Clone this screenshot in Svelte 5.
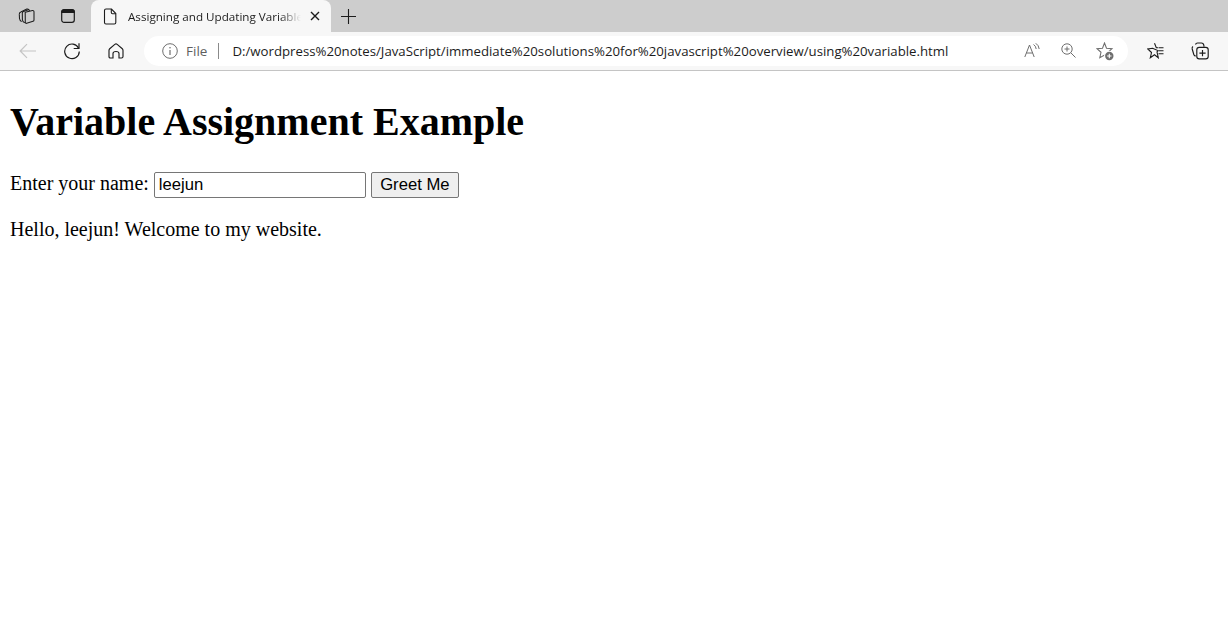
<script>
  let name = $state('leejun');
  let greeting = $state('Hello, leejun! Welcome to my website.');

  function greet() {
    greeting = `Hello, ${name}! Welcome to my website.`;
  }
</script>

<div class="tabstrip">
  <button class="strip-btn first" aria-label="Workspaces">
    <svg width="18" height="18" viewBox="0 0 18 18" fill="none" stroke="#1c1c1c" stroke-width="1.050">
      <path d="M8.200 5.200 L15.500 3.600 Q17 3.400 17 4.900 V13 Q17 14 16 14.300 L9.700 16.300 Q8.300 16.600 8.300 15.200 Z" />
      <path d="M5.300 6 L5.400 12.800 Q5.500 14.800 7.800 15.700" />
      <path d="M2.300 7.200 L2.500 11.500 Q2.700 13.600 4.700 14.600" />
      <path d="M2.300 7.200 Q2.200 5.400 3.800 4.900 L9.800 2.100 Q11.600 1.500 12.700 3.900" />
      <path d="M5.300 6 Q5.200 4.800 6.500 4.400 L12 2.600" />
    </svg>
  </button>
  <button class="strip-btn second" aria-label="Vertical tabs">
    <svg width="14" height="14" viewBox="0 0 14 14" fill="none" stroke="#1c1c1c" stroke-width="1.200">
      <path d="M.2 3 Q.2 .2 3 .2 H11 Q13.800 .2 13.800 3 V4 H.2 Z" fill="#1c1c1c" stroke="none" />
      <rect x=".7" y=".7" width="12.600" height="12.600" rx="2.400" />
    </svg>
  </button>

  <div class="tab">
    <svg class="doc" width="14" height="17" viewBox="0 0 14 17" fill="none" stroke="#1c1c1c" stroke-width="1.100">
      <path d="M1.500 2.500 Q1.500 1 3 1 H8.500 L12.800 5.500 V14.500 Q12.800 16 11.300 16 H3 Q1.500 16 1.500 14.500 Z" />
      <path d="M8.300 1 V4.500 Q8.300 5.700 9.500 5.700 H12.800" />
    </svg>
    <span class="tab-title">Assigning and Updating Variables</span>
    <svg class="tab-close" width="10" height="10" viewBox="0 0 10 10" stroke="#1c1c1c" stroke-width="1.400">
      <path d="M1 1 L9 9 M9 1 L1 9" />
    </svg>
  </div>

  <button class="strip-btn plus" aria-label="New tab">
    <svg width="15" height="15" viewBox="0 0 15 15" stroke="#1c1c1c" stroke-width="1.100">
      <path d="M7.500 0 V15 M0 7.500 H15" />
    </svg>
  </button>
</div>

<div class="toolbar">
  <button class="tool back" aria-label="Back">
    <svg width="18" height="16" viewBox="0 0 18 16" fill="none" stroke="#c4c4c4" stroke-width="1.200">
      <path d="M17 8 H1.200 M8 1.200 L1.200 8 L8 14.800" />
    </svg>
  </button>
  <button class="tool reload" aria-label="Refresh">
    <svg width="18" height="18" viewBox="0 0 18 18" fill="none" stroke="#1c1c1c" stroke-width="1.200">
      <path d="M15.600 6.200 A7.300 7.300 0 1 0 16.300 9.500" />
      <path d="M16 1.200 V6.500 H10.700" />
    </svg>
  </button>
  <button class="tool home" aria-label="Home">
    <svg width="16" height="16" viewBox="0 0 16 16" fill="none" stroke="#1c1c1c" stroke-width="1.150">
      <path d="M6.800 1.400 Q8 .5 9.200 1.400 L14.300 5.800 Q15 6.400 15 7.400 V13.500 Q15 15 13.500 15 H11 V10.500 Q11 8.500 8 8.500 Q5 8.500 5 10.500 V15 H2.500 Q1 15 1 13.500 V7.400 Q1 6.400 1.700 5.800 Z" />
    </svg>
  </button>

  <div class="addressbar">
    <svg class="info" width="16" height="16" viewBox="0 0 16 16" fill="none" stroke="#6e6e6e" stroke-width="1">
      <circle cx="8" cy="8" r="7.300" />
      <path d="M8 7 V12" stroke-width="1.200" />
      <circle cx="8" cy="4.700" r=".8" fill="#6e6e6e" stroke="none" />
    </svg>
    <span class="file">File</span>
    <span class="divider"></span>
    <span class="url">D:/wordpress%20notes/JavaScript/immediate%20solutions%20for%20javascript%20overview/using%20variable.html</span>
    <svg class="read" width="16" height="15" viewBox="0 0 16 15" fill="none" stroke="#6e6e6e" stroke-width="1">
      <path d="M.8 14 L5.500 2 L10.200 14 M2.400 10 H8.600" />
      <path d="M9.500 1.500 Q11.800 2.800 12.200 6 M11.800 .3 Q14.800 2.300 15.200 6" />
    </svg>
    <svg class="zoom" width="15" height="15" viewBox="0 0 15 15" fill="none" stroke="#6e6e6e" stroke-width="1">
      <circle cx="6" cy="6" r="5.200" />
      <path d="M9.800 9.800 L14.500 14.500 M6 3.500 V8.500 M3.500 6 H8.500" />
    </svg>
    <svg class="fav-add" width="18" height="19" viewBox="0 0 18 19" fill="none" stroke="#6e6e6e" stroke-width="1.050">
      <path d="M8.500 1 L10.500 6.200 L16 6.700 L12 10.300 L13.200 15.800 L8.500 13 L3.800 15.800 L5 10.300 L1 6.700 L6.500 6.200 Z" />
      <circle cx="13.300" cy="14" r="5.300" fill="#fff" stroke="none" />
      <circle cx="13.300" cy="14" r="4.200" fill="#6e6e6e" stroke="none" />
      <path d="M13.300 11.800 V16.200 M11.100 14 H15.500" stroke="#fff" stroke-width="1.100" />
    </svg>
  </div>

  <button class="tool favs" aria-label="Favorites">
    <svg width="18" height="17" viewBox="0 0 18 17" fill="none" stroke="#1c1c1c" stroke-width="1.100">
      <path d="M7.500 1.200 L9.300 5.800 H11 M11 8.600 L10 9.800 L11.300 15.800 L7.500 12.800 L3.300 15.800 L4.500 10.500 L.8 6.900 L5.600 6.200 Z" />
      <path d="M11.500 5.800 H16.500 M11.500 8.800 H16.500 M11.500 11.800 H16.500" />
    </svg>
  </button>
  <button class="tool collections" aria-label="Collections">
    <svg width="18" height="18" viewBox="0 0 18 18" fill="none" stroke="#1c1c1c" stroke-width="1.150">
      <path d="M4.500 2.500 Q5 1 6.500 1 H10.500 Q12.300 1 12.800 3 L13 4.800" />
      <path d="M2 4.500 Q.8 5.300 1.200 7 L2.800 12.500 Q3.300 14 4.800 14" />
      <rect x="5.800" y="5.400" width="11.400" height="11.400" rx="2.400" />
      <path d="M11.500 8 V14.200 M8.400 11.100 H14.600" />
    </svg>
  </button>
</div>

<main class="page">
  <h1>Variable Assignment Example</h1>
  <p>
    <label for="name">Enter your name:</label>
    <input id="name" type="text" bind:value={name} />
    <button class="greet" onclick={greet}>Greet Me</button>
  </p>
  <p>{greeting}</p>
</main>

<style>
  :global(body) {
    background: #fff;
    color: #000;
    font-family: "Liberation Serif", "Times New Roman", serif;
    font-size: 20px;
  }

  button {
    padding: 0;
    border: none;
    background: none;
    display: flex;
    align-items: center;
    justify-content: center;
  }

  .tabstrip {
    height: 32px;
    background: #cdcdcd;
    display: flex;
    align-items: center;
  }

  .strip-btn.first { margin-left: 17px; width: 18px; }
  .strip-btn.second { margin-left: 26px; width: 14px; }
  .strip-btn.plus { margin-left: 10px; width: 15px; }

  .tab {
    box-sizing: border-box;
    width: 240px;
    height: 32px;
    margin-left: 16px;
    padding: 0 11px 0 12px;
    background: #f7f7f7;
    border-radius: 8px 8px 0 0;
    display: flex;
    align-items: center;
  }

  .doc { flex: none; }

  .tab-title {
    flex: 1;
    min-width: 0;
    margin-left: 11px;
    font: 11.65px "Open Sans", "Liberation Sans", sans-serif;
    color: #1c1c1c;
    white-space: nowrap;
    overflow: hidden;
    -webkit-mask-image: linear-gradient(to right, #000 88%, transparent 100%);
    mask-image: linear-gradient(to right, #000 88%, transparent 100%);
  }

  .tab-close { flex: none; margin-left: 9px; }

  .toolbar {
    box-sizing: border-box;
    height: 39px;
    padding-bottom: 1px;
    background: #f7f7f7;
    border-bottom: 1px solid #c4c4c4;
    display: flex;
    align-items: center;
  }

  .tool { flex: none; }
  .back { margin-left: 19px; width: 18px; }
  .reload { margin-left: 26px; width: 18px; }
  .home { margin-left: 27px; width: 16px; }
  .favs { margin-left: 19px; width: 18px; }
  .collections { margin-left: 26px; width: 18px; }

  .addressbar {
    box-sizing: border-box;
    flex: none;
    width: 984px;
    height: 30px;
    margin-left: 20px;
    padding: 0 14px 0 18px;
    background: #fff;
    border-radius: 15px;
    display: flex;
    align-items: center;
    font: 13.5px "Open Sans", "Liberation Sans", sans-serif;
  }

  .info { flex: none; }
  .file { margin-left: 8px; color: #5f5f5f; }
  .divider { width: 1px; height: 16px; margin: 0 13px 0 11px; background: #8a8a8a; }
  .url { flex: 1; min-width: 0; font-size: 13.22px; color: #1c1c1c; white-space: nowrap; overflow: hidden; }
  .read { flex: none; margin-left: 10px; }
  .zoom { flex: none; margin-left: 21px; }
  .fav-add { flex: none; margin-left: 20px; margin-top: 1px; }

  .page { padding: 0 10px; }

  h1 {
    font-size: 40px;
    font-weight: bold;
    margin: 27px 0;
  }

  p {
    margin: 20px 0;
  }

  input {
    box-sizing: border-box;
    width: 212px;
    height: 26px;
    padding: 0 4px;
    border: 1px solid #767676;
    border-radius: 2px;
    font: 16.67px "Liberation Sans", Arial, sans-serif;
    color: #000;
    background: #fff;
    outline: none;
  }

  .greet {
    display: inline-block;
    box-sizing: border-box;
    width: 88px;
    height: 26px;
    border: 1px solid #767676;
    border-radius: 2px;
    background: #efefef;
    font: 16.67px "Liberation Sans", Arial, sans-serif;
    color: #000;
  }
</style>
